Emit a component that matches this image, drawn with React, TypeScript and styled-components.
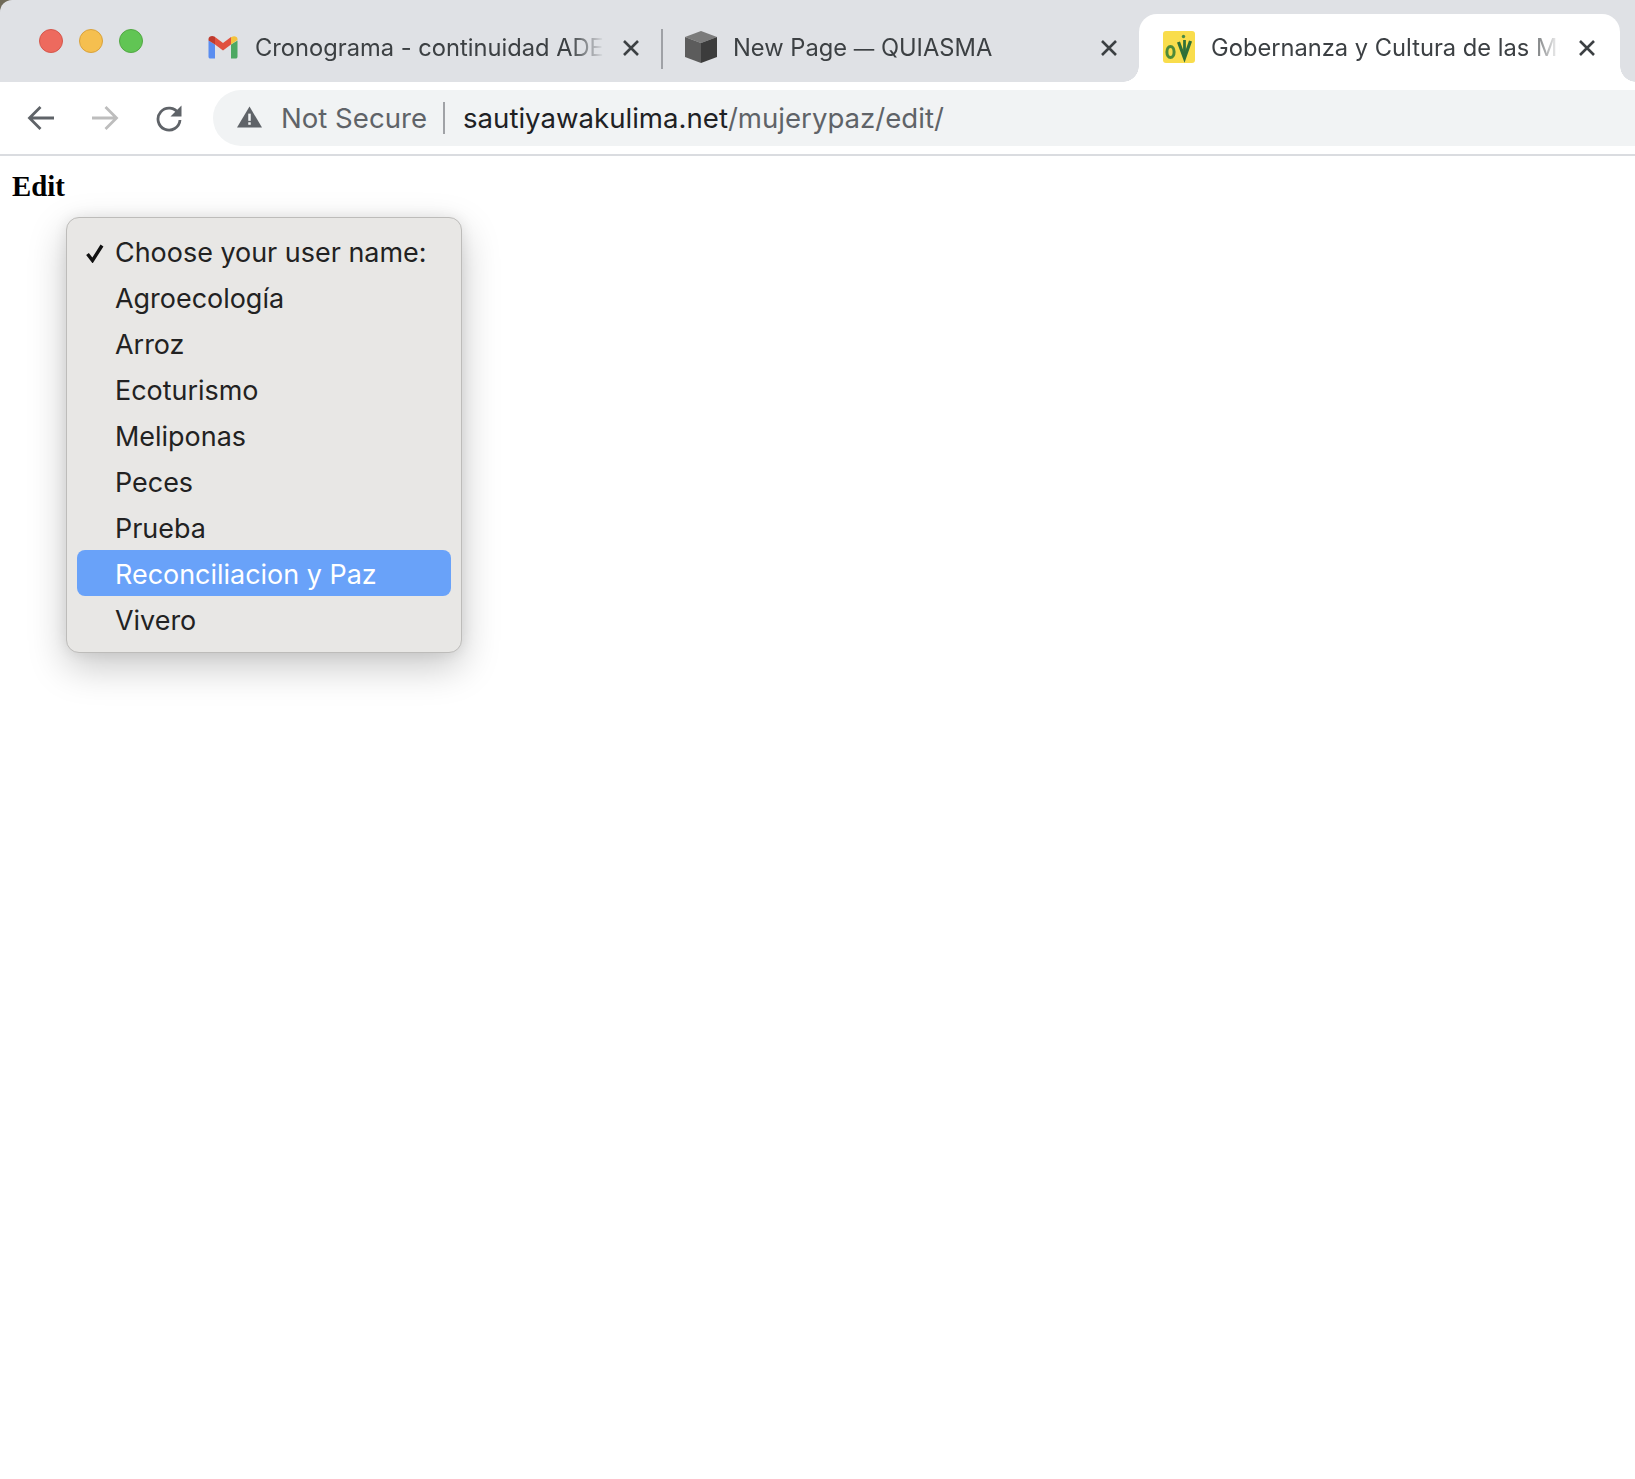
import React from "react";
import styled, { createGlobalStyle } from "styled-components";

const Global = createGlobalStyle`
  html, body { margin: 0; padding: 0; background: #fff; }
  #root { min-height: 1479px; }
  * { box-sizing: border-box; }
`;

const uiFont = `Inter, "Liberation Sans", Arial, sans-serif`;

const Corner = styled.div`
  background: #6f6a58;
`;

const TabStrip = styled.div`
  height: 82px;
  background: #dfe1e5;
  border-top-left-radius: 12px;
  display: flex;
  align-items: flex-start;
`;

const Lights = styled.div`
  width: 185px;
  flex: none;
  display: flex;
  gap: 16px;
  padding: 29px 0 0 39px;
`;

const Light = styled.span<{ $c: string; $b: string }>`
  width: 24px;
  height: 24px;
  border-radius: 50%;
  background: ${(p) => p.$c};
  border: 1px solid ${(p) => p.$b};
`;

const Tabs = styled.div`
  display: flex;
  align-items: flex-start;
  padding-top: 14px;
`;

const Tab = styled.div<{ $active?: boolean; $w: number; $pl: number; $pr: number }>`
  position: relative;
  width: ${(p) => p.$w}px;
  height: 68px;
  padding: 17px ${(p) => p.$pr}px 0 ${(p) => p.$pl}px;
  display: flex;
  align-items: flex-start;
  border-radius: 18px 18px 0 0;
  background: ${(p) => (p.$active ? "#fff" : "transparent")};
  ${(p) =>
    p.$active
      ? `
    &::before, &::after {
      content: "";
      position: absolute;
      bottom: 0;
      width: 16px;
      height: 16px;
    }
    &::before { left: -16px; background: radial-gradient(circle at 0 0, transparent 15.5px, #fff 16px); }
    &::after { right: -16px; background: radial-gradient(circle at 100% 0, transparent 15.5px, #fff 16px); }
  `
      : ""}
`;

const Divider = styled.span`
  flex: none;
  width: 2px;
  height: 40px;
  margin-top: 15px;
  background: #9fa1a6;
`;

const Favicon = styled.svg`
  flex: none;
  width: 32px;
  height: 32px;
`;

const TabTitle = styled.div`
  flex: 1;
  min-width: 0;
  margin-left: 16px;
  height: 33px;
  font: 400 23.7px/33px ${uiFont};
  color: #3c4043;
  white-space: nowrap;
  overflow: hidden;
  -webkit-mask-image: linear-gradient(to right, #000 calc(100% - 34px), transparent 100%);
  mask-image: linear-gradient(to right, #000 calc(100% - 34px), transparent 100%);
`;

const Dash = styled.span`
  font-size: 20.5px;
`;

const TabClose = styled.svg`
  flex: none;
  width: 18px;
  height: 18px;
  margin: 8px 0 0 18px;
`;

const Toolbar = styled.div`
  height: 74px;
  background: #fff;
  border-bottom: 2px solid #dadce0;
  padding-top: 8px;
  display: flex;
  align-items: flex-start;
`;

const NavButtons = styled.div`
  flex: none;
  width: 213px;
  height: 56px;
  padding-left: 27px;
  display: flex;
  align-items: center;
  gap: 36px;
`;

const NavIcon = styled.svg`
  flex: none;
  width: 28px;
  height: 28px;
`;

const Omnibox = styled.div`
  flex: 1;
  height: 56px;
  background: #f1f3f4;
  border-radius: 28px 0 0 28px;
  display: flex;
  align-items: center;
  padding-left: 24px;
  font: 400 27.6px/1 ${uiFont};
`;

const Warning = styled.svg`
  flex: none;
  width: 25px;
  height: 24px;
  margin: -2px 1px 0 0;
`;

const Security = styled.span`
  margin-left: 18px;
  padding-top: 2px;
  color: #5f6368;
`;

const Sep = styled.span`
  width: 2px;
  height: 32px;
  margin: 0 18px 0 16px;
  background: #a0a2a6;
`;

const Host = styled.span`
  padding-top: 2px;
  color: #202124;
`;

const Path = styled.span`
  padding-top: 2px;
  color: #5f6368;
`;

const Page = styled.main`
  padding: 13px 0 0 12px;
`;

const Heading = styled.div`
  font: 700 28.8px/34px "Liberation Serif", "Times New Roman", serif;
  color: #000;
`;

const Menu = styled.div`
  margin: 14px 0 0 54px;
  width: 396px;
  height: 436px;
  padding: 10px 10px 0;
  background: #e8e7e5;
  border: 1px solid #bdbcba;
  border-radius: 13px;
  box-shadow: 0 14px 38px rgba(0, 0, 0, 0.22), 0 0 14px rgba(0, 0, 0, 0.08);
`;

const Item = styled.div<{ $hl?: boolean }>`
  position: relative;
  height: 46px;
  padding-left: 38px;
  border-radius: 8px;
  font: 400 26.95px/50px ${uiFont};
  color: ${(p) => (p.$hl ? "#fff" : "#222")};
  background: ${(p) => (p.$hl ? "#69a2f9" : "transparent")};
  white-space: nowrap;
`;

const Check = styled.svg`
  position: absolute;
  left: 8px;
  top: 15px;
  width: 20px;
  height: 20px;
`;

const GmailIcon = () => (
  <Favicon viewBox="0 0 32 32">
    <path d="M1.500 9.500v16.200c0 1 .8 1.800 1.800 1.800H8V13.500z" fill="#5a8df0" />
    <path d="M24 13.500v14h4.700c1 0 1.800-.8 1.800-1.800V9.500z" fill="#4da862" />
    <path d="M24 6v7.500l6.500-4.500V8c0-2.800-3.800-3.600-5.900-2z" fill="#f4c23c" />
    <path d="M8 13.500V6l8 6 8-6v7.500L16 19.500z" fill="#e0503f" />
    <path d="M1.500 8v1.500L8 13.500V6l-.6-.4C5.300 4 1.500 5.200 1.500 8z" fill="#bf3a2e" />
  </Favicon>
);

const CubeIcon = () => (
  <Favicon viewBox="0 0 32 32">
    <polygon points="16,0 32,6 16,12 0,6" fill="#7b7b7b" />
    <polygon points="0,6 16,12 16,32 0,26" fill="#5c5c5c" />
    <polygon points="32,6 16,12 16,32 32,26" fill="#3c3c3c" />
  </Favicon>
);

const OvIcon = () => (
  <Favicon viewBox="0 0 32 32">
    <rect width="32" height="32" rx="3" fill="#f9dd4c" />
    <ellipse cx="7.500" cy="21" rx="3.600" ry="5.600" fill="none" stroke="#4f8a38" strokeWidth="3" />
    <path d="M15.500 11l6 16 6-17" fill="none" stroke="#2f7038" strokeWidth="3.200" />
    <path d="M21.500 9v18" stroke="#2f7038" strokeWidth="2.800" />
    <circle cx="20.500" cy="5.500" r="1.700" fill="#4a8a45" />
  </Favicon>
);

const CloseIcon = () => (
  <TabClose viewBox="0 0 18 18">
    <path d="M2 2l14 14M16 2L2 16" stroke="#3c4043" strokeWidth="2.600" fill="none" />
  </TabClose>
);

export default function App() {
  return (
    <>
      <Global />
      <Corner>
        <TabStrip>
          <Lights>
            <Light $c="#ed6a5e" $b="#d5574c" />
            <Light $c="#f5bf4f" $b="#d9a23c" />
            <Light $c="#61c554" $b="#52a843" />
          </Lights>
          <Tabs>
            <Tab $w={476} $pl={22} $pr={21}>
              <GmailIcon />
              <TabTitle>Cronograma - continuidad ADE</TabTitle>
              <CloseIcon />
            </Tab>
            <Divider />
            <Tab $w={476} $pl={22} $pr={21}>
              <CubeIcon />
              <TabTitle>
                New Page <Dash>—</Dash> QUIASMA
              </TabTitle>
              <CloseIcon />
            </Tab>
            <Tab $w={481} $pl={24} $pr={24} $active>
              <OvIcon />
              <TabTitle>Gobernanza y Cultura de las Mu</TabTitle>
              <CloseIcon />
            </Tab>
          </Tabs>
        </TabStrip>
      </Corner>
      <Toolbar>
        <NavButtons>
          <NavIcon viewBox="0 0 28 28">
            <path d="M27 14H3M13.500 3L2.500 14l11 11" fill="none" stroke="#5f6368" strokeWidth="2.800" />
          </NavIcon>
          <NavIcon viewBox="0 0 28 28">
            <path d="M1 14h24M14.500 3l11 11-11 11" fill="none" stroke="#bdbdbd" strokeWidth="2.800" />
          </NavIcon>
          <NavIcon viewBox="0 0 28 28">
            <path d="M23.500 9.500A11 11 0 1 0 25 16" fill="none" stroke="#5f6368" strokeWidth="2.800" />
            <path d="M26.500 1.500v11h-11z" fill="#5f6368" />
          </NavIcon>
        </NavButtons>
        <Omnibox>
          <Warning viewBox="0 0 26 24">
            <path d="M13 1l13 22H0z" fill="#5f6368" />
            <rect x="11.700" y="8.500" width="2.600" height="7.500" fill="#f1f3f4" />
            <rect x="11.700" y="17.500" width="2.600" height="2.600" fill="#f1f3f4" />
          </Warning>
          <Security>Not Secure</Security>
          <Sep />
          <Host>sautiyawakulima.net</Host>
          <Path>/mujerypaz/edit/</Path>
        </Omnibox>
      </Toolbar>
      <Page>
        <Heading>Edit</Heading>
        <Menu>
          <Item>
            <Check viewBox="0 0 20 20">
              <path d="M2.500 11l5 6.500L17 2.500" fill="none" stroke="#111" strokeWidth="3.400" />
            </Check>
            Choose your user name:
          </Item>
          <Item>Agroecología</Item>
          <Item>Arroz</Item>
          <Item>Ecoturismo</Item>
          <Item>Meliponas</Item>
          <Item>Peces</Item>
          <Item>Prueba</Item>
          <Item $hl>Reconciliacion y Paz</Item>
          <Item>Vivero</Item>
        </Menu>
      </Page>
    </>
  );
}
